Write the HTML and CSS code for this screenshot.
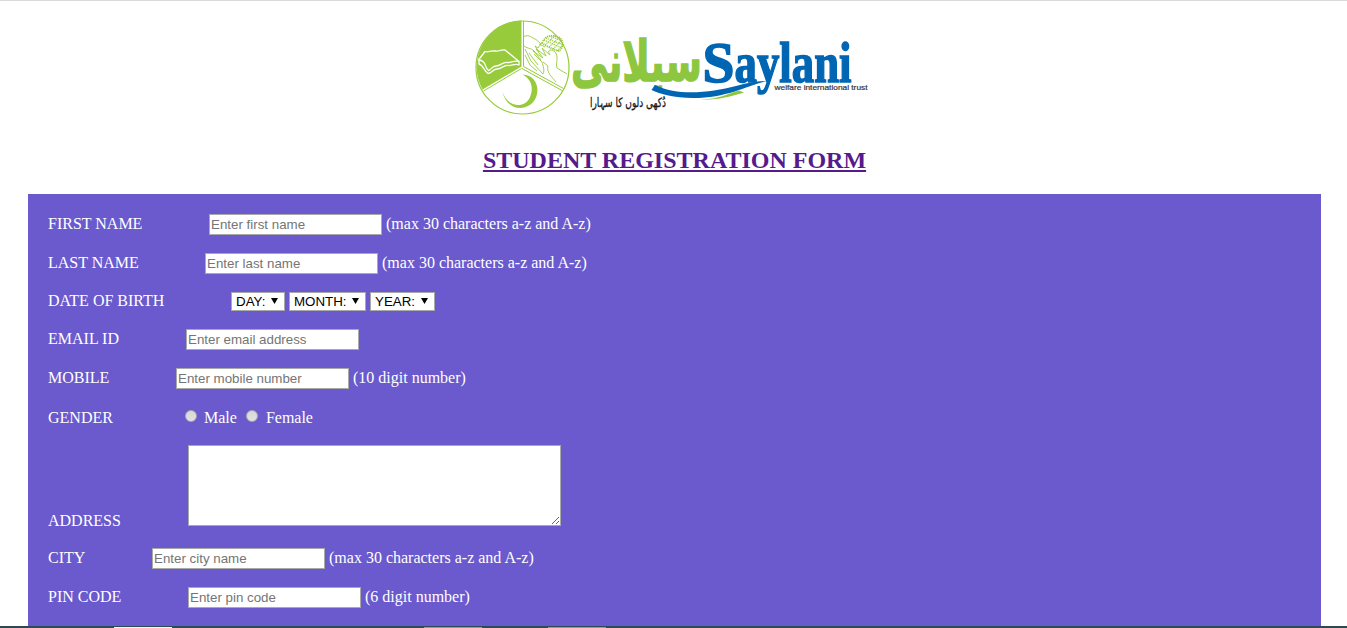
FILE: index.html
```html
<!DOCTYPE html>
<html lang="en">
<head>
<meta charset="utf-8">
<title>Student Registration Form</title>
<link rel="stylesheet" href="styles.css">
</head>
<body>
<header class="header">
  <svg class="logo" viewBox="470 15 405 105" width="405" height="105" role="img" aria-label="Saylani Welfare International Trust">
    <circle cx="522.5" cy="67.5" r="46.5" fill="#fff" stroke="#97cb3b" stroke-width="1.2"/>
    <path d="M521.5 20.500V66.500L482.500 89.500A46.500 46.500 0 0 1 521.500 20.500Z" fill="#97cb3b"/>
    <g fill="none" stroke="#97cb3b" stroke-width="1">
      <path d="M523.500 21V66.500L563.500 88.500M521.500 68.500L483.500 91M522 68.500L562 90.500"/>
      <g stroke-width=".9">
        <path d="M524 36.500C529 34 532 38 536 39.500L541 44L538 48L535 46L539 52M524 46C528 49 532 48 535 52"/>
        <path d="M525 49L531 61L543 74C545 70 543 66 542 62L534 54M525 55L530 65L537 71M529 53L538 65M533 50L541 60"/>
        <path d="M533 51L543 58L536 49L546 56L542 48L550 55C547 50 550 49 554 51C560 56 555 63 557 68L567 74M543 62L548 66C546 72 552 77 556 82M539 44L545 47"/>
      </g>
      <path d="M542 43C545 35 553 34 560 38C564 42 563 48 559 51C552 49 546 46 542 43Z" stroke-width="1.800" stroke-dasharray="1.200 .8"/>
      <path d="M544 40L562 48M546 38L563 45M549 36L563 41M545 45L556 35M549 47L560 37M553 49L562 40M557 51L564 44" stroke-width="1.100" stroke-dasharray="1.300 .8"/>
    </g>
    <g fill="none" stroke="#fff" stroke-width="1.300" stroke-linejoin="round">
      <path d="M478.500 60L485 51.500C489 53 490 50 495 51C499 52 501 49 505 50L519 61.500C514 60 511 63 507 62.500C502 62 501 66 496 66C492 66 491 70 488.500 70.500C485 68 486 64 483.500 62C482 60.500 480 60 478.500 60Z"/>
      <path d="M479 60.500V64C483 65 484 71 488 73.500C492 73 493 69 497 69C502 69 503 65 508 65.500C512 66 515 63 519 65V61.500"/>
    </g>
    <path d="M522.500 74.500C534 75 539 85 537 94C534 111 508 115 502.500 92C508 108 525 109 530 97C534 87 531 79 522.500 74.500Z" fill="#97cb3b"/>
    <text class="logo-urdu" x="571" y="81" textLength="131" lengthAdjust="spacingAndGlyphs">سيلانى</text>
    <path d="M651.500 90L655 85C680 97 711 92 736 86C748 83 757 81 767 81C748 85 728 98 693 98C674 98 660 94 651.500 90Z" fill="#0066b3"/>
    <path d="M701 99.500C719 99 727 94 739 90.500L744 92.500C730 97 717 100 701 99.500Z" fill="#8dc63f"/>
    <text class="logo-initial" x="702.500" y="81.500" textLength="32" lengthAdjust="spacingAndGlyphs">S</text>
    <text class="logo-name" x="734.500" y="81.500" textLength="117" lengthAdjust="spacingAndGlyphs">aylani</text>
    <text class="logo-tag" x="774.500" y="89.500" textLength="93" lengthAdjust="spacingAndGlyphs">welfare international trust</text>
    <text class="logo-motto" x="590" y="107" textLength="76" lengthAdjust="spacingAndGlyphs">دُکھی دلوں کا سہارا</text>
  </svg>
  <h2 class="title">STUDENT REGISTRATION FORM</h2>
</header>

<form class="form">
  <div class="row"><label class="w-first">FIRST NAME</label><input class="field" type="text" placeholder="Enter first name"><span class="hint">(max 30 characters a-z and A-z)</span></div>
  <div class="row row-last"><label class="w-last">LAST NAME</label><input class="field" type="text" placeholder="Enter last name"><span class="hint">(max 30 characters a-z and A-z)</span></div>
  <div class="row row-birth"><label class="w-birth">DATE OF BIRTH</label>
    <button type="button" class="select s-day"><span>DAY:</span><svg class="arrow" viewBox="0 0 7 6"><path d="M0 0H7L3.500 6Z"/></svg></button>
    <button type="button" class="select s-month"><span>MONTH:</span><svg class="arrow" viewBox="0 0 7 6"><path d="M0 0H7L3.500 6Z"/></svg></button>
    <button type="button" class="select s-year"><span>YEAR:</span><svg class="arrow" viewBox="0 0 7 6"><path d="M0 0H7L3.500 6Z"/></svg></button>
  </div>
  <div class="row row-email"><label class="w-email">EMAIL ID</label><input class="field" type="text" placeholder="Enter email address"></div>
  <div class="row row-mobile"><label class="w-mobile">MOBILE</label><input class="field" type="text" placeholder="Enter mobile number"><span class="hint">(10 digit number)</span></div>
  <div class="row row-gender"><label class="w-gender">GENDER</label><input class="radio" type="radio" name="gender"><span class="male">Male</span><input class="radio" type="radio" name="gender"><span class="female">Female</span></div>
  <div class="row row-address"><label class="w-address">ADDRESS</label><textarea class="area"></textarea></div>
  <div class="row row-city"><label class="w-city">CITY</label><input class="field" type="text" placeholder="Enter city name"><span class="hint">(max 30 characters a-z and A-z)</span></div>
  <div class="row row-pin"><label class="w-address">PIN CODE</label><input class="field" type="text" placeholder="Enter pin code"><span class="hint">(6 digit number)</span></div>
</form>
<footer class="taskbar"><i class="tab tab-active"></i><i class="tab tab-second"></i><i class="tab tab-third"></i></footer>
</body>
</html>
```
FILE: styles.css
```css
* { box-sizing: border-box; }
body {
  margin: 0;
  height: 628px;
  overflow: hidden;
  display: flex;
  flex-direction: column;
  background: #fff;
  border-top: 1px solid #dadadd;
  font: 16px/18px "Liberation Serif", serif;
}
.header { flex: none; height: 193px; padding-top: 14px; }
.logo { display: block; margin-left: 470px; }
.logo-urdu { font: bold 56px "DejaVu Sans", sans-serif; fill: #8dc63f; stroke: #8dc63f; stroke-width: 1.5; }
.logo-initial { font: bold 58px "Liberation Serif", serif; fill: #0066b3; stroke: #0066b3; stroke-width: 1.5; }
.logo-name { font: bold 56px "Liberation Serif", serif; fill: #0066b3; stroke: #0066b3; stroke-width: 1.5; }
.logo-tag { font: 8px "Liberation Sans", sans-serif; fill: #353338; stroke: #353338; stroke-width: .2; }
.logo-motto { font: 13px "DejaVu Sans", sans-serif; fill: #171717; stroke: #171717; stroke-width: .3; }
.title {
  margin: 26px 0 0 2px;
  font-size: 24px;
  line-height: 28px;
  text-align: center;
  color: #551a8b;
  text-decoration: underline;
}
.form {
  flex: none;
  height: 432px;
  margin: 0 26px 0 28px;
  padding: 20px 20px 0;
  overflow: hidden;
  background: #6a5acd;
  color: #fff;
}
.row { display: flex; align-items: center; height: 21px; }
.row > label, .row > span { padding-bottom: 2px; }
.row-last { margin-top: 18px; }
.row-birth { margin-top: 17px; }
.row-email { margin-top: 17px; }
.row-mobile { margin-top: 18px; }
.row-gender { margin-top: 19px; }
.row-address { margin-top: 16px; height: 81px; align-items: flex-end; }
.row-city { margin-top: 22px; }
.row-pin { margin-top: 18px; }
.w-first { width: 161px; }
.w-last { width: 157px; }
.w-birth { width: 183px; }
.w-email { width: 138px; }
.w-mobile { width: 128px; }
.w-gender { width: 137px; }
.w-address { width: 140px; }
.w-city { width: 104px; }
.field {
  width: 173px;
  height: 21px;
  margin: 0;
  padding: 1px;
  border: 1px solid #a9a9a9;
  border-radius: 0;
  background: #fff;
  font: 13.333px "Liberation Sans", sans-serif;
}
.field::placeholder { color: #757575; }
.hint { margin-left: 4px; }
.select {
  display: flex;
  align-items: center;
  justify-content: space-between;
  height: 19px;
  margin: 0 4px 0 0;
  padding: 0 6px 0 4px;
  border: 1px solid #a9a9a9;
  border-radius: 0;
  background: #fff;
  color: #000;
  font: 13.333px/17px "Liberation Sans", sans-serif;
}
.s-day { width: 54px; }
.s-month { width: 77px; }
.s-year { width: 65px; }
.arrow { width: 7px; height: 6px; margin-bottom: 1px; }
.radio {
  appearance: none;
  width: 12px;
  height: 12px;
  margin: 0 7px 5px 0;
  border: 1px solid #aaa;
  border-radius: 50%;
  background: linear-gradient(#d8d8d8, #e2e2e2);
}
.male { margin-right: 9px; }
.row-gender .female { margin-left: 1px; }
.area {
  width: 373px;
  height: 81px;
  margin: 0;
  border: 1px solid #a9a9a9;
  border-radius: 0;
  background: #fff;
}
.row-address label { margin-bottom: -6px; }
.row-gender > label, .row-gender > span { padding-bottom: 1px; }
.taskbar { flex: none; display: flex; height: 2px; padding: 1px 0 0 114px; background: #2c4a54; }
.tab { width: 58px; height: 1px; background: #8f9ca0; }
.tab-active { background: #f4f4f4; }
.tab-second { margin-left: 252px; }
.tab-third { margin-left: 66px; }
```
